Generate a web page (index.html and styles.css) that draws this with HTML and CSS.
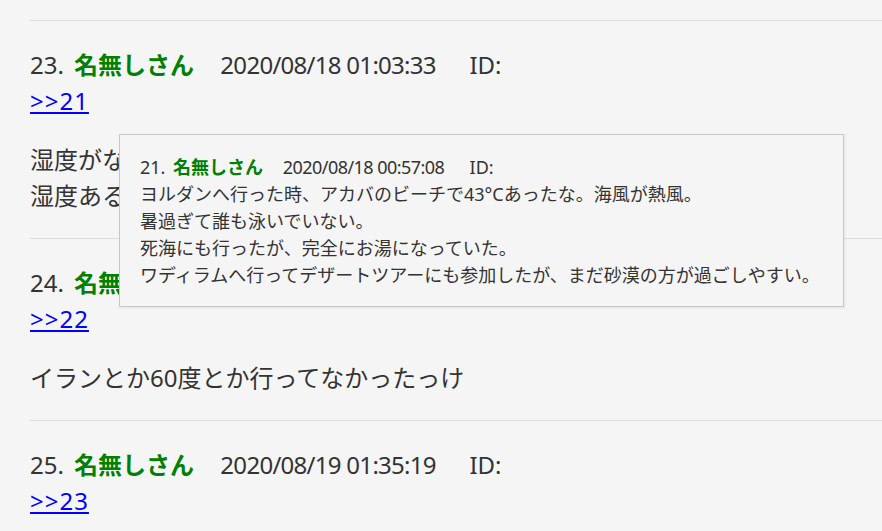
FILE: index.html
```html
<!DOCTYPE html>
<html lang="ja">
<head>
<meta charset="utf-8">
<link rel="stylesheet" href="styles.css">
</head>
<body>
<main class="thread">
  <article class="post">
    <div class="post-head"><span class="num">23.</span><span class="name">名無しさん</span><span class="date">2020/08/18 01:03:33</span><span class="id">ID:</span></div>
    <div class="post-ref"><a href="#p21">&gt;&gt;21</a></div>
    <div class="post-body">湿度がないからまだマシなんだよな<br>湿度あると地獄</div>
  </article>
  <article class="post">
    <div class="post-head"><span class="num">24.</span><span class="name">名無しさん</span><span class="date">2020/08/18 01:10:45</span><span class="id">ID:</span></div>
    <div class="post-ref"><a href="#p22">&gt;&gt;22</a></div>
    <div class="post-body">イランとか60度とか行ってなかったっけ</div>
  </article>
  <article class="post">
    <div class="post-head"><span class="num">25.</span><span class="name">名無しさん</span><span class="date">2020/08/19 01:35:19</span><span class="id">ID:</span></div>
    <div class="post-ref"><a href="#p23">&gt;&gt;23</a></div>
  </article>

  <div class="popup">
    <div class="post-head"><span class="num">21.</span><span class="name">名無しさん</span><span class="date">2020/08/18 00:57:08</span><span class="id">ID:</span></div>
    <div class="popup-body">ヨルダンへ行った時、アカバのビーチで43°Cあったな。海風が熱風。<br>暑過ぎて誰も泳いでいない。<br>死海にも行ったが、完全にお湯になっていた。<br>ワディラムへ行ってデザートツアーにも参加したが、まだ砂漠の方が過ごしやすい。</div>
  </div>
</main>
</body>
</html>
```

FILE: styles.css
```css
html, body {
  margin: 0;
  padding: 0;
  background: #f5f5f5;
  overflow: hidden;
}

body {
  font-family: "Noto Sans", "Noto Sans CJK JP", sans-serif;
  color: #333333;
}

.thread {
  position: relative;
  padding: 20px 0 0 30px;
  font-size: 24px;
  line-height: 1.5;
}

.post {
  border-top: 1px solid #dddddd;
  padding: 26px 0 24px;
}

.post-head {
  white-space: nowrap;
}

.num {
  margin-right: 0.42em;
}

.name {
  color: #008000;
  font-weight: bold;
  margin-right: 1.1em;
}

.date {
  letter-spacing: -0.03em;
  margin-right: 1.4em;
}

.post-ref a {
  color: #0000ff;
  text-decoration: underline;
  letter-spacing: 1px;
}

.post-body {
  margin-top: 23px;
}

.popup {
  position: absolute;
  left: 119px;
  top: 134px;
  width: 683px;
  height: 133px;
  padding: 19px 20px;
  border: 1px solid #c8c8c8;
  background: #f5f5f5;
  box-shadow: 1px 1px 2px rgba(0, 0, 0, 0.08);
  font-size: 18px;
  line-height: 1.5;
}
```
